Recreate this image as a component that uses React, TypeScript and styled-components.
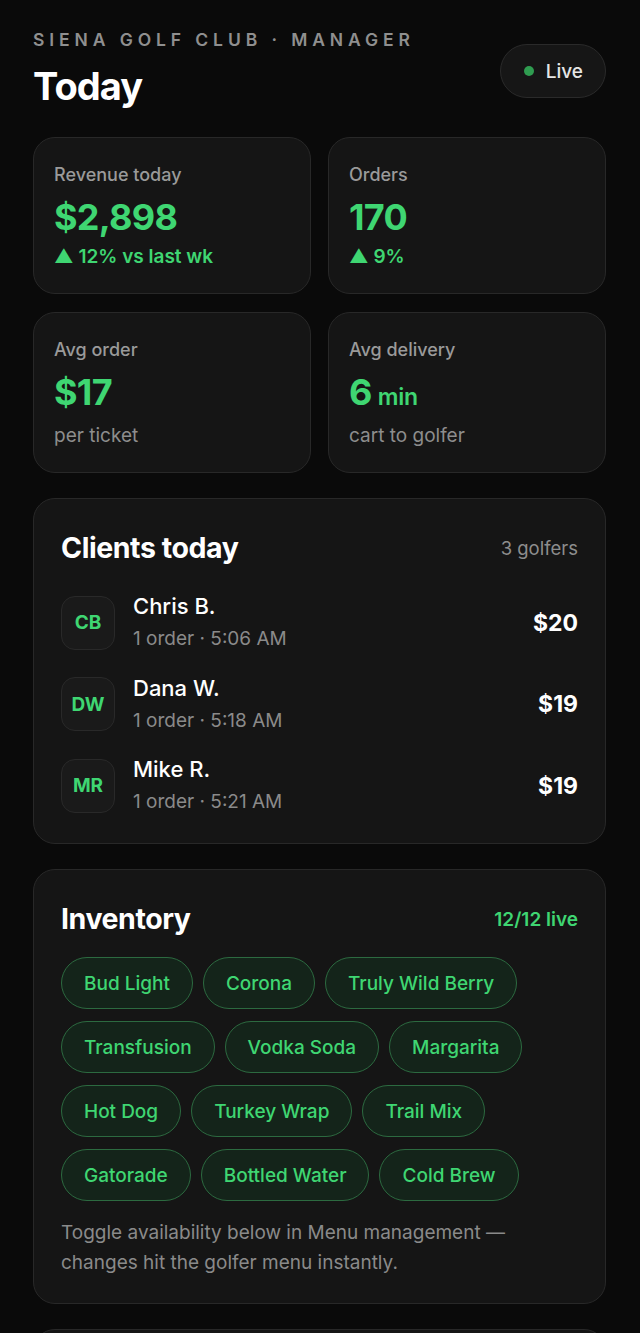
import React from "react";
import styled, { createGlobalStyle } from "styled-components";

const GlobalStyle = createGlobalStyle`
  * { box-sizing: border-box; }
  body {
    margin: 0;
    background: #0a0a0a;
    font-family: Inter, "Noto Sans", "Liberation Sans", sans-serif;
    -webkit-font-smoothing: antialiased;
  }
`;

const GREEN = "#3fd672";

const Page = styled.div`
  padding: 29px 34px 0 33px;
  display: flex;
  flex-direction: column;
`;

const Header = styled.header`
  display: flex;
  align-items: flex-start;
  justify-content: space-between;
`;

const Eyebrow = styled.div`
  font-size: 17.5px;
  font-weight: 600;
  letter-spacing: 0.28em;
  color: #8f8f8f;
  line-height: 22px;
`;

const PageTitle = styled.h1`
  margin: 12px 0 0;
  font-size: 38px;
  line-height: 46px;
  font-weight: 700;
  letter-spacing: -0.025em;
  color: #ffffff;
`;

const LivePill = styled.div`
  display: flex;
  align-items: center;
  gap: 12px;
  height: 54px;
  padding: 0 22px 0 23px;
  margin-top: 15px;
  border-radius: 27px;
  background: #161616;
  border: 1px solid #2a2a2a;
  color: #e6e6e6;
  font-size: 19px;
  font-weight: 500;
`;

const Dot = styled.span`
  width: 10px;
  height: 10px;
  border-radius: 50%;
  background: #2f9c50;
`;

const StatGrid = styled.div`
  display: grid;
  grid-template-columns: 1fr 1fr;
  gap: 18px 17px;
  margin-top: 28px;
`;

const Card = styled.section<{ $padBottom?: number }>`
  background: #151515;
  border: 1px solid #282828;
  border-radius: 22px;
  padding: 26px 20px ${(p) => p.$padBottom ?? 24}px;
`;

const StatLabel = styled.div`
  font-size: 18px;
  line-height: 22px;
  color: #9a9a9a;
  font-weight: 500;
`;

const StatValue = styled.div`
  margin-top: 10px;
  font-size: 36px;
  line-height: 42px;
  font-weight: 700;
  letter-spacing: -0.02em;
  color: ${GREEN};
`;

const Unit = styled.span`
  font-size: 23px;
  line-height: 1;
  font-weight: 600;
  letter-spacing: -0.01em;
  margin-left: 6px;
`;

const StatNote = styled.div<{ $accent?: boolean }>`
  margin-top: ${(p) => (p.$accent ? 7 : 11)}px;
  font-size: 19px;
  line-height: 24px;
  font-weight: ${(p) => (p.$accent ? 600 : 400)};
  color: ${(p) => (p.$accent ? GREEN : "#8d8d8d")};
`;

const Panel = styled(Card)`
  margin-top: 25px;
  padding-left: 27px;
  padding-right: 27px;
  padding-top: 32px;
`;

const PanelHead = styled.div`
  display: flex;
  align-items: center;
  justify-content: space-between;
`;

const PanelTitle = styled.h2`
  margin: 0;
  font-size: 28.5px;
  line-height: 34px;
  font-weight: 700;
  letter-spacing: -0.015em;
  color: #ffffff;
`;

const PanelMeta = styled.span<{ $accent?: boolean }>`
  font-size: ${(p) => (p.$accent ? 19 : 18.5)}px;
  font-weight: ${(p) => (p.$accent ? 600 : 400)};
  color: ${(p) => (p.$accent ? GREEN : "#8d8d8d")};
`;

const ClientList = styled.div`
  display: flex;
  flex-direction: column;
  gap: 22.5px;
  margin-top: 28px;
`;

const ClientRow = styled.div`
  display: flex;
  align-items: center;
  gap: 18px;
`;

const Avatar = styled.div`
  width: 54px;
  height: 54px;
  flex-shrink: 0;
  border-radius: 14px;
  background: #1a1a1a;
  border: 1px solid #292929;
  display: flex;
  align-items: center;
  justify-content: center;
  color: ${GREEN};
  font-size: 19px;
  font-weight: 700;
`;

const ClientInfo = styled.div`
  flex: 1;
  display: flex;
  flex-direction: column;
  gap: 7px;
`;

const ClientName = styled.div`
  font-size: 22px;
  line-height: 26px;
  font-weight: 500;
  color: #ffffff;
`;

const ClientSub = styled.div`
  font-size: 19px;
  line-height: 26px;
  color: #8a8a8a;
`;

const Amount = styled.div`
  font-size: 23px;
  font-weight: 700;
  color: #ffffff;
`;

const Chips = styled.div`
  display: flex;
  flex-wrap: wrap;
  gap: 12px 10px;
  margin-top: 21px;
`;

const Chip = styled.span`
  height: 52px;
  padding: 0 22px;
  display: inline-flex;
  align-items: center;
  border-radius: 26px;
  background: #14241a;
  border: 1px solid #2c6a40;
  color: ${GREEN};
  font-size: 19px;
  font-weight: 500;
`;

const Footnote = styled.p`
  margin: 17px 0 0;
  max-width: 470px;
  font-size: 19px;
  line-height: 30px;
  color: #8a8a8a;
`;

const stats = [
  { label: "Revenue today", value: "$2,898", note: "▲ 12% vs last wk", accent: true },
  { label: "Orders", value: "170", note: "▲ 9%", accent: true },
  { label: "Avg order", value: "$17", note: "per ticket", accent: false },
  { label: "Avg delivery", value: "6", unit: "min", note: "cart to golfer", accent: false },
];

const clients = [
  { initials: "CB", name: "Chris B.", time: "5:06 AM", total: "$20" },
  { initials: "DW", name: "Dana W.", time: "5:18 AM", total: "$19" },
  { initials: "MR", name: "Mike R.", time: "5:21 AM", total: "$19" },
];

const items = [
  "Bud Light",
  "Corona",
  "Truly Wild Berry",
  "Transfusion",
  "Vodka Soda",
  "Margarita",
  "Hot Dog",
  "Turkey Wrap",
  "Trail Mix",
  "Gatorade",
  "Bottled Water",
  "Cold Brew",
];

export default function App() {
  return (
    <>
      <GlobalStyle />
      <Page>
        <Header>
          <div>
            <Eyebrow>SIENA GOLF CLUB · MANAGER</Eyebrow>
            <PageTitle>Today</PageTitle>
          </div>
          <LivePill>
            <Dot />
            Live
          </LivePill>
        </Header>

        <StatGrid>
          {stats.map((s) => (
            <Card key={s.label}>
              <StatLabel>{s.label}</StatLabel>
              <StatValue>
                {s.value}
                {s.unit && <Unit>{s.unit}</Unit>}
              </StatValue>
              <StatNote $accent={s.accent}>{s.note}</StatNote>
            </Card>
          ))}
        </StatGrid>

        <Panel $padBottom={28}>
          <PanelHead>
            <PanelTitle>Clients today</PanelTitle>
            <PanelMeta>3 golfers</PanelMeta>
          </PanelHead>
          <ClientList>
            {clients.map((c) => (
              <ClientRow key={c.initials}>
                <Avatar>{c.initials}</Avatar>
                <ClientInfo>
                  <ClientName>{c.name}</ClientName>
                  <ClientSub>1 order · {c.time}</ClientSub>
                </ClientInfo>
                <Amount>{c.total}</Amount>
              </ClientRow>
            ))}
          </ClientList>
        </Panel>

        <Panel $padBottom={25}>
          <PanelHead>
            <PanelTitle>Inventory</PanelTitle>
            <PanelMeta $accent>12/12 live</PanelMeta>
          </PanelHead>
          <Chips>
            {items.map((i) => (
              <Chip key={i}>{i}</Chip>
            ))}
          </Chips>
          <Footnote>
            Toggle availability below in Menu management — changes hit the golfer menu instantly.
          </Footnote>
        </Panel>

        <Panel $padBottom={32}>
          <PanelHead>
            <PanelTitle>Menu management</PanelTitle>
          </PanelHead>
        </Panel>
      </Page>
    </>
  );
}
